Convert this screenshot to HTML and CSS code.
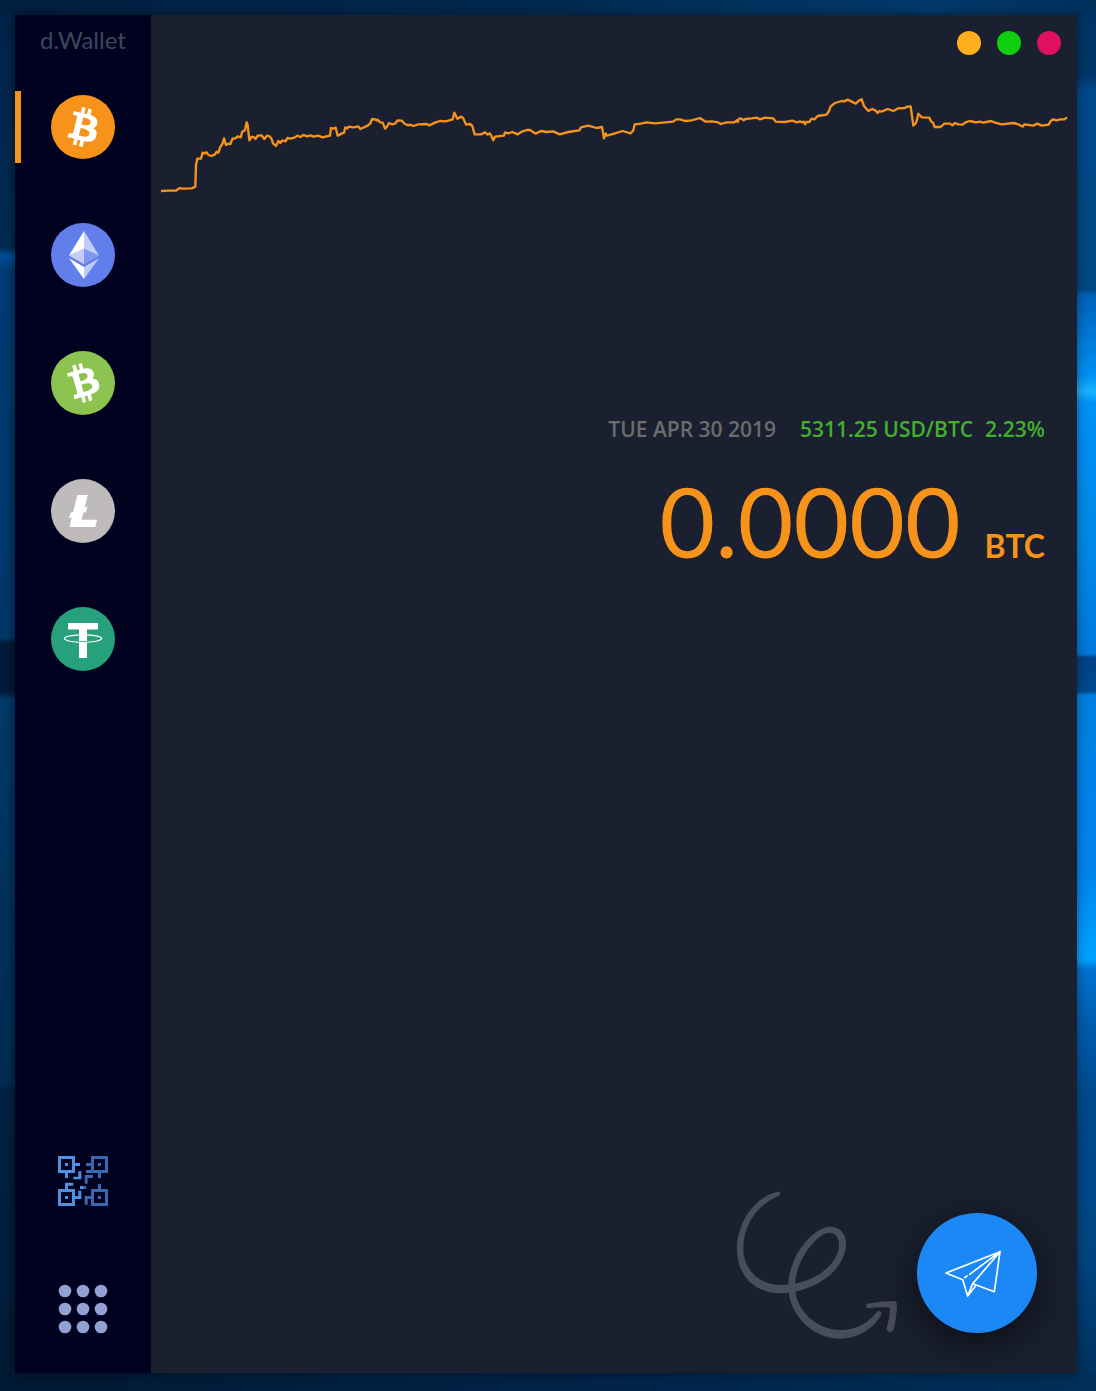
FILE: index.html
```html
<!DOCTYPE html>
<html lang="en">
<head>
<meta charset="utf-8">
<meta name="viewport" content="width=device-width, initial-scale=1">
<title>d.Wallet</title>
<link rel="stylesheet" href="styles.css">
</head>
<body>
<div class="window">
  <aside class="sidebar">
    <div class="brand">d.Wallet</div>
    <nav class="coins" aria-label="Coins">
      <button class="coin coin-active" type="button" aria-label="Bitcoin">
        <svg viewBox="0 0 32 32"><circle cx="16" cy="16" r="16" fill="#f7931a"/><path fill="#fff" fill-rule="evenodd" d="M23.189 14.02c.314-2.096-1.283-3.223-3.465-3.975l.708-2.84-1.728-.43-.69 2.765c-.454-.114-.92-.22-1.385-.326l.695-2.783L15.596 6l-.708 2.839c-.376-.086-.746-.17-1.104-.26l.002-.009-2.384-.595-.46 1.846s1.283.294 1.256.312c.7.175.826.638.805 1.006l-.806 3.235c.048.012.11.03.18.057l-.183-.045-1.13 4.532c-.086.212-.303.531-.793.41.018.025-1.256-.313-1.256-.313l-.858 1.978 2.25.561c.418.105.828.215 1.231.318l-.715 2.872 1.727.43.708-2.84c.472.127.93.245 1.378.357l-.706 2.828 1.728.43.715-2.866c2.948.558 5.164.333 6.097-2.333.752-2.146-.037-3.385-1.588-4.192 1.13-.26 1.98-1.003 2.207-2.538zm-3.95 5.538c-.533 2.147-4.148.986-5.32.695l.95-3.805c1.172.293 4.929.872 4.37 3.11zm.535-5.569c-.487 1.953-3.495.96-4.47.717l.86-3.45c.975.243 4.118.696 3.61 2.733z"/></svg>
      </button>
      <button class="coin" type="button" aria-label="Ethereum">
        <svg viewBox="0 0 32 32"><circle cx="16" cy="16" r="16" fill="#627eea"/><g fill="#fff"><path fill-opacity=".602" d="M16.498 4v8.87l7.497 3.35z"/><path d="M16.498 4L9 16.22l7.498-3.35z"/><path fill-opacity=".602" d="M16.498 21.968v6.027L24 17.616z"/><path d="M16.498 27.995v-6.028L9 17.616z"/><path fill-opacity=".2" d="M16.498 20.573l7.497-4.353-7.497-3.348z"/><path fill-opacity=".602" d="M9 16.22l7.498 4.353v-7.701z"/></g></svg>
      </button>
      <button class="coin" type="button" aria-label="Bitcoin Cash">
        <svg viewBox="0 0 32 32"><circle cx="16" cy="16" r="16" fill="#8dc351"/><path fill="#fff" fill-rule="evenodd" d="M21.207 10.534c-.776-1.972-2.722-2.15-4.988-1.71l-.807-2.813-1.712.491.786 2.74c-.45.128-.908.27-1.363.41l-.79-2.758-1.711.49.805 2.813c-.368.114-.73.226-1.085.328l-.003-.01-2.362.677.525 1.83s1.258-.388 1.243-.358c.694-.199 1.035.139 1.2.468l.92 3.204c.047-.013.11-.029.184-.04l-.181.052 1.287 4.49c.032.227.004.612-.48.752.027.013-1.246.356-1.246.356l.247 2.143 2.228-.64c.415-.117.825-.227 1.226-.34l.817 2.845 1.71-.49-.807-2.815a65.74 65.74 0 001.372-.38l.802 2.803 1.713-.491-.814-2.84c2.831-.991 4.638-2.294 4.113-5.07-.422-2.234-1.724-2.912-3.471-2.836.848-.79 1.213-1.858.642-3.3zm-.65 6.77c.61 2.127-3.1 2.929-4.26 3.263l-1.081-3.77c1.16-.333 4.704-1.71 5.34.508zm-2.322-5.09c.554 1.935-2.547 2.58-3.514 2.857l-.98-3.419c.966-.277 3.915-1.455 4.494.563z"/></svg>
      </button>
      <button class="coin" type="button" aria-label="Litecoin">
        <svg viewBox="0 0 32 32"><circle cx="16" cy="16" r="16" fill="#bfbbbb"/><path fill="#fff" d="M10.427 19.214L9 19.768l.688-2.759 1.444-.58L13.213 8h5.129l-1.519 6.196 1.41-.571-.68 2.75-1.427.571-.848 3.483H23L22.127 24H9.252z"/></svg>
      </button>
      <button class="coin" type="button" aria-label="Tether">
        <svg viewBox="0 0 32 32"><circle cx="16" cy="16" r="16" fill="#26a17b"/><path fill="#fff" d="M8.500 8h15v3.300H18v14.200h-4V11.300H8.500z"/><ellipse cx="16" cy="15.800" rx="9.300" ry="1.900" fill="none" stroke="#fff" stroke-width=".6"/><path d="M14 17.200h4" stroke="#26a17b" stroke-width=".4"/></svg>
      </button>
    </nav>
    <div class="tools">
      <button class="tool" type="button" aria-label="QR code">
        <svg class="qr" viewBox="0 0 150 150">
          <g fill="#4f90e0">
            <path fill-rule="evenodd" d="M0 0h51v51H0zM9 9v33h33V9z"/><path d="M21 21h9v9h-9zM51 21h15v9H51zM21 51h9v15h-9zM61 46h9v24H46v-8h15z"/>
            <path fill-rule="evenodd" d="M0 99h51v51H0zM9 108v33h33v-33z"/><path d="M21 120h9v9h-9zM21 80h25v9H30v10h-9zM51 120h10v-16h9v25H51zM66 90h9v9h-9z"/>
          </g>
          <g fill="#3b66b0">
            <path fill-rule="evenodd" d="M99 0h51v51H99zM108 9v33h33V9z"/><path d="M120 21h9v9h-9zM84 21h15v9H84zM84 42h15v9H84zM120 51h9v15h-9zM80 57h25v9H89v17h-9zM75 90h9v9h-9z"/>
            <path fill-rule="evenodd" d="M99 99h51v51H99zM108 108v33h33v-33z"/><path d="M120 120h9v9h-9zM120 84h9v15h-9zM80 120h19v9H89v17h-9z"/>
          </g>
        </svg>
      </button>
      <button class="tool" type="button" aria-label="Menu">
        <svg class="dots" viewBox="0 0 50 50" fill="#93a0d2"><circle cx="7" cy="7" r="6.300"/><circle cx="25" cy="7" r="6.300"/><circle cx="43" cy="7" r="6.300"/><circle cx="7" cy="25" r="6.300"/><circle cx="25" cy="25" r="6.300"/><circle cx="43" cy="25" r="6.300"/><circle cx="7" cy="43" r="6.300"/><circle cx="25" cy="43" r="6.300"/><circle cx="43" cy="43" r="6.300"/></svg>
      </button>
    </div>
  </aside>

  <main class="main">
    <header class="controls">
      <button class="control minimize" type="button" aria-label="Minimize"></button>
      <button class="control maximize" type="button" aria-label="Maximize"></button>
      <button class="control close" type="button" aria-label="Close"></button>
    </header>

    <svg class="chart" viewBox="18 30 2718 300" role="img" aria-label="BTC price history">
      <polyline fill="none" stroke="#f7931a" stroke-width="7" stroke-linejoin="round" points="18,318 40,317 63,317 69,313 75,309 82,311 110,310 121,305 123,240 127,221 138,221 143,203 148,205 155,202 160,210 170,213 180,208 185,200 190,203 196,186 203,175 207,160 213,180 220,176 226,177 233,160 240,161 248,154 257,157 262,140 270,135 275,112 278,120 283,166 290,155 297,157 302,162 308,152 320,151 328,162 336,152 344,154 350,162 354,175 363,183 370,168 376,174 382,166 392,169 397,159 407,161 420,157 427,152 436,156 446,150 456,154 466,151 476,155 490,152 502,157 525,152 528,129 535,131 542,128 548,152 560,146 567,143 571,127 577,130 582,125 595,127 610,124 616,132 638,122 646,115 651,102 660,103 666,106 668,104 675,112 683,113 690,131 697,123 702,114 712,118 720,116 728,106 740,107 750,117 760,121 765,119 775,123 790,118 815,117 823,121 840,113 855,108 872,109 893,103 898,83 907,101 919,95 925,100 933,119 945,117 952,123 959,148 978,148 990,142 998,149 1003,145 1006,147 1015,166 1020,155 1047,152 1050,142 1060,145 1072,141 1088,148 1100,140 1115,135 1125,135 1142,146 1158,138 1175,141 1195,139 1214,148 1240,141 1273,136 1278,127 1300,122 1325,129 1341,126 1347,160 1352,145 1356,152 1380,145 1403,138 1426,145 1435,136 1439,118 1458,116 1475,112 1500,115 1554,110 1564,103 1575,103 1590,108 1610,106 1635,99 1652,110 1670,109 1690,112 1697,117 1715,112 1738,112 1745,106 1748,111 1752,101 1760,101 1766,106 1771,102 1790,100 1805,98 1815,103 1830,98 1855,100 1862,110 1890,111 1912,107 1925,112 1935,109 1940,112 1947,110 1950,118 1954,111 1963,111 1970,101 1978,103 1988,93 2015,89 2022,78 2027,64 2040,54 2060,48 2068,49 2078,44 2102,56 2113,46 2120,43 2127,63 2140,78 2152,72 2162,77 2168,84 2173,78 2180,80 2198,72 2215,78 2230,70 2249,69 2257,65 2267,64 2275,122 2283,114 2287,100 2290,86 2300,97 2323,98 2328,109 2334,113 2339,126 2357,126 2368,116 2385,116 2392,121 2400,114 2410,118 2423,119 2431,112 2445,108 2463,112 2475,110 2485,113 2508,108 2520,113 2540,118 2575,114 2590,118 2603,125 2608,118 2635,122 2647,116 2660,122 2681,119 2688,107 2695,103 2705,106 2715,103 2728,103 2736,97"/>
    </svg>

    <section class="summary">
      <div class="quote">
        <span class="date">TUE APR 30 2019</span>
        <span class="rate">5311.25 USD/BTC</span>
        <span class="change">2.23%</span>
      </div>
      <div class="balance">
        <span class="amount">0.0000</span>
        <span class="unit">BTC</span>
      </div>
    </section>

    <footer class="actions">
      <svg class="squiggle" viewBox="48 60 486 498" aria-hidden="true">
        <g fill="#484d5a">
          <path d="M172 65C105 82 51 155 51 238C51 320 108 370 180 370C285 368 378 300 378 220C378 188 357 170 330 170C282 170 205 255 205 350C205 430 275 506 360 506C415 506 460 475 483 436C488 426 478 419 470 426C445 460 407 480 362 480C290 480 225 420 225 350C225 270 292 188 330 188C348 188 357 205 357 225C357 285 275 347 180 345C115 345 70 295 70 236C70 165 110 105 176 77C184 74 180 63 172 65z"/>
          <path d="M443 401C470 396 495 393 520 393C528 393 531 398 531 405C530 432 527 455 521 478C517 490 500 488 500 475C506 455 509 435 510 413C488 411 466 412 447 414C436 415 435 404 443 401z"/>
        </g>
      </svg>
      <button class="send" type="button" aria-label="Send">
        <svg viewBox="675 213 192 192" fill="none" stroke="#fff" stroke-width="5" stroke-linejoin="round" stroke-linecap="round"><path d="M840 245L678 309L728 329L743 378L758 341L840 245L823 365L758 341M743 378L766 349M840 245L749 313M741 318L734 323"/></svg>
      </button>
    </footer>
  </main>
</div>
</body>
</html>
```
FILE: styles.css
```css
* {
  box-sizing: border-box;
}

body {
  margin: 0;
  min-height: 100vh;
  padding: 15px 19px 18px 15px;
  display: flex;
  font-family: "Open Sans", "Noto Sans", sans-serif;
  background:
    linear-gradient(90deg, #002142, #00284e 45%, #003a6c 85%, #00305c) top / 100% 15px no-repeat,
    linear-gradient(90deg, #001a34, #00254a 60%, #002f5a) bottom / 100% 18px no-repeat,
    linear-gradient(180deg, #00254a 0%, #002c56 17.800%, #00509a 18.400%, #003c74 19.500%, #00386c 45.800%, #001c3a 46.300%, #001c3a 49.700%, #003a6c 50.300%, #00305a 70%, #002e56 77.800%, #002344 78.400%, #001c36 100%) left / 50% 100% no-repeat,
    linear-gradient(180deg, #003364 0%, #00366a 5.500%, #004a8a 6.500%, #004884 20.800%, #0062b8 21.200%, #0090f4 27%, #18b4ff 28.100%, #0092f6 29%, #0088e8 40%, #0078dc 47%, #004284 47.300%, #004a90 49.700%, #0080e4 50%, #0086ee 63%, #00a4ff 69%, #0072d0 69.700%, #0060b4 73%, #004a8c 79%, #004684 90%, #002f5a 100%) right / 50% 100% no-repeat;
}

button {
  padding: 0;
  border: 0;
  background: none;
  cursor: pointer;
}

svg {
  display: block;
}

.window {
  flex: 1;
  display: flex;
  background: #1a2030;
  box-shadow: 0 0 12px rgba(0, 0, 0, 0.4);
}

.sidebar {
  flex: none;
  width: 136px;
  padding: 11px 0 32px;
  display: flex;
  flex-direction: column;
  background: #000220;
  box-shadow: 0 0 12px rgba(0, 0, 0, 0.2);
}

.brand {
  font: 400 24px/28px Lato, sans-serif;
  text-align: center;
  color: #3d475c;
}

.coins {
  margin-top: 37px;
  display: flex;
  flex-direction: column;
  gap: 56px;
}

.coin {
  height: 72px;
  display: flex;
  align-items: center;
  justify-content: center;
  border: 0 solid transparent;
  border-width: 0 6px;
}

.coin-active {
  border-left-color: #f7931a;
}

.coin svg {
  width: 64px;
  height: 64px;
}

.tools {
  margin-top: auto;
  padding-top: 64px;
  display: flex;
  flex-direction: column;
  align-items: center;
  gap: 64px;
}

.tool {
  width: 64px;
  height: 64px;
  display: grid;
  place-items: center;
}

.tool svg {
  width: 50px;
  height: 50px;
}

.main {
  flex: 1;
  min-width: 0;
  display: flex;
  flex-direction: column;
}

.controls {
  padding: 16px 16px 0;
  display: flex;
  justify-content: flex-end;
  gap: 16px;
}

.control {
  width: 24px;
  height: 24px;
  border-radius: 50%;
}

.minimize {
  background: #ffae1c;
}

.maximize {
  background: #0fcf0f;
}

.close {
  background: #e01060;
}

.chart {
  margin: 40px 10px 0;
  overflow: visible;
}

.summary {
  margin-top: 218px;
  padding: 0 32px;
}

.quote {
  display: flex;
  justify-content: flex-end;
  font-size: 21px;
  font-weight: 600;
  line-height: 32px;
  color: #43b02a;
}

.date {
  margin-right: 24px;
  color: #6c6c6c;
}

.rate {
  margin-right: 12px;
}

.balance {
  margin-top: 16px;
  display: flex;
  justify-content: flex-end;
  align-items: baseline;
  gap: 24px;
  font-family: Lato, sans-serif;
  line-height: 120px;
  color: #f7931a;
}

.amount {
  font-size: 96px;
}

.unit {
  font-size: 32px;
  font-weight: 700;
}

.actions {
  margin-top: auto;
  padding: 64px 40px 17px;
  display: flex;
  justify-content: flex-end;
  align-items: center;
  gap: 19px;
}

.squiggle {
  width: 162px;
  height: 166px;
}

.send {
  width: 120px;
  height: 120px;
  display: grid;
  place-items: center;
  border-radius: 50%;
  background: #1b88f6;
  box-shadow: 0 10px 40px rgba(0, 0, 0, 0.6);
}

.send svg {
  width: 64px;
  height: 64px;
}
```
